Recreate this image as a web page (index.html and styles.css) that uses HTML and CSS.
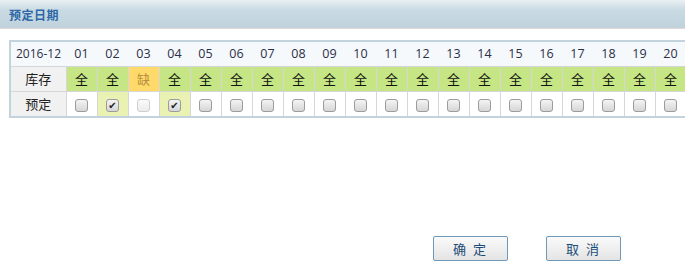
FILE: index.html
```html
<!DOCTYPE html>
<html lang="zh-CN">
	<head>
		<meta charset="UTF-8" />
		<title>预定日期</title>
		<link rel="stylesheet" href="styles.css">
	</head>
	<body>
		<div class="panel-head">
			<h2 class="panel-title">预定日期</h2>
		</div>

		<div class="calendar">
			<table class="cal-table">
				<tr class="row-days">
					<th class="label">2016-12</th>
					<th>01</th><th>02</th><th>03</th><th>04</th><th>05</th>
					<th>06</th><th>07</th><th>08</th><th>09</th><th>10</th>
					<th>11</th><th>12</th><th>13</th><th>14</th><th>15</th>
					<th>16</th><th>17</th><th>18</th><th>19</th><th>20</th>
				</tr>
				<tr class="row-stock">
					<td class="label">库存</td>
					<td>全</td><td>全</td><td class="short">缺</td><td>全</td><td>全</td>
					<td>全</td><td>全</td><td>全</td><td>全</td><td>全</td>
					<td>全</td><td>全</td><td>全</td><td>全</td><td>全</td>
					<td>全</td><td>全</td><td>全</td><td>全</td><td>全</td>
				</tr>
				<tr class="row-book">
					<td class="label">预定</td>
					<td><span class="cb"></span></td>
					<td class="picked"><span class="cb checked">✔</span></td>
					<td><span class="cb disabled"></span></td>
					<td class="picked"><span class="cb checked">✔</span></td>
					<td><span class="cb"></span></td>
					<td><span class="cb"></span></td>
					<td><span class="cb"></span></td>
					<td><span class="cb"></span></td>
					<td><span class="cb"></span></td>
					<td><span class="cb"></span></td>
					<td><span class="cb"></span></td>
					<td><span class="cb"></span></td>
					<td><span class="cb"></span></td>
					<td><span class="cb"></span></td>
					<td><span class="cb"></span></td>
					<td><span class="cb"></span></td>
					<td><span class="cb"></span></td>
					<td><span class="cb"></span></td>
					<td><span class="cb"></span></td>
					<td><span class="cb"></span></td>
				</tr>
			</table>
		</div>

		<div class="actions">
			<button class="btn">确 定</button>
			<button class="btn">取 消</button>
		</div>
	</body>
</html>
```

FILE: styles.css
```css
* { margin: 0; padding: 0; box-sizing: border-box; }
html, body { width: 685px; height: 269px; overflow: hidden; }
body {
	font-family: "Noto Sans CJK SC", "DejaVu Sans", sans-serif;
	font-size: 12px;
	color: #222;
	background: white;
}
.panel-head {
	height: 29px;
	background: linear-gradient(#eaf0f4, #c9dae3 35%, #bfd2dc);
	border-bottom: 1px solid #e2d6da;
	padding-left: 9px;
}
.panel-title {
	font-size: 12px;
	font-weight: bold;
	letter-spacing: 0.5px;
	color: #2e68a6;
	line-height: 29px;
}
.calendar {
	margin: 11px 0 0 9px;
	width: 700px;
	border: 2px solid #c3d3de;
	border-right: none;
}
.cal-table {
	border-collapse: collapse;
	table-layout: fixed;
	width: 675px;
	font-family: "Open Sans", "Noto Sans CJK SC", sans-serif;
}
.cal-table th, .cal-table td {
	width: 31px;
	text-align: center;
	font-weight: normal;
	border: 1px solid #d6d6d6;
	border-top: none;
}
.cal-table .label {
	width: 55px;
	border-left: none;
	background: #f1f1f1;
}
.row-days th {
	height: 24px;
	background: #f6f9fc;
	border-left: none;
	border-right: none;
	color: #2b2f48;
	font-size: 12.5px;
}
.row-days .label { background: #f6f9fc; font-size: 12px; }
.row-stock td {
	height: 25px;
	background: #c6e584;
	font-family: "Noto Sans CJK SC", sans-serif;
	font-size: 13px;
	color: #111;
}
.row-stock .short { background: #ffda6a; color: #b89040; }
.row-book td {
	height: 25px;
	border-bottom: none;
	background: white;
}
.row-stock .label, .row-book .label {
	background: #f1f1f1;
	font-family: "Noto Sans CJK SC", sans-serif;
	font-size: 13px;
	color: #222;
}
.row-book .picked { background: #e9f1b3; }
.cb {
	display: inline-block;
	width: 13px;
	height: 13px;
	border: 1px solid #9c9c9c;
	border-radius: 3px;
	background: linear-gradient(#f4f4f4, #d6d6d6);
	vertical-align: middle;
	font-size: 10px;
	font-weight: bold;
	line-height: 11px;
	color: #222;
	font-family: "DejaVu Sans", sans-serif;
}
.cb.disabled { border-color: #cfcfcf; background: linear-gradient(#fafafa, #ececec); }
.actions {
	display: flex;
	gap: 38px;
	margin: 118px 0 0 433px;
}
.btn {
	width: 75px;
	height: 25px;
	border: 1px solid #6f98b8;
	border-radius: 2px;
	background: linear-gradient(#fafafa, #e4e4e4);
	color: #1c4c78;
	font-family: "Noto Sans CJK SC", sans-serif;
	font-size: 13px;
	letter-spacing: 2px;
}
```
